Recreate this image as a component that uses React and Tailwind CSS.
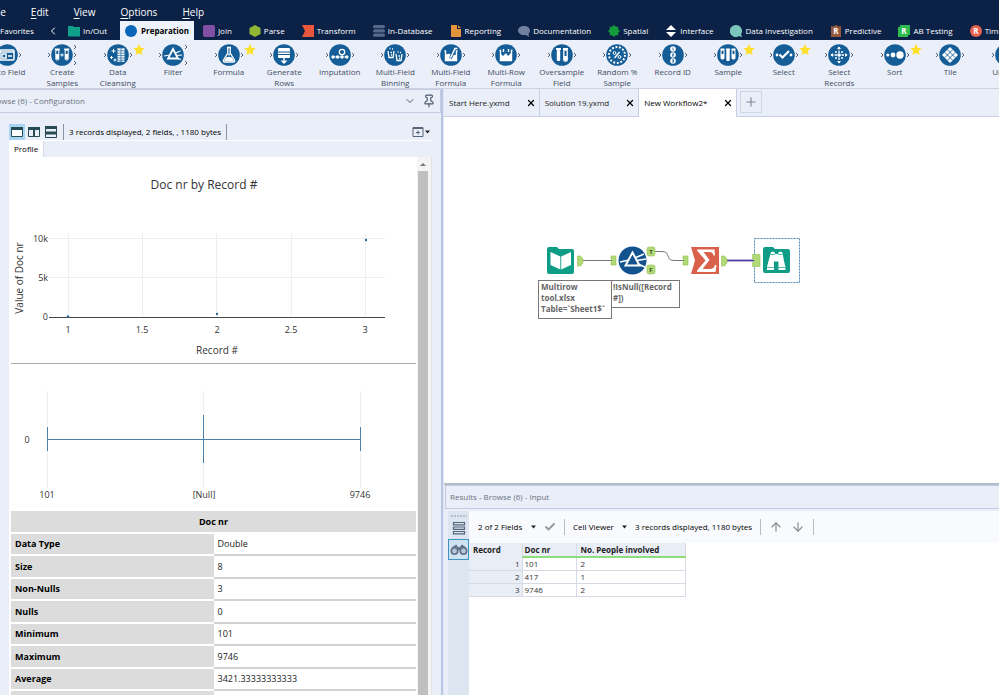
import { ChevronDown, ChevronLeft, Pin, ArrowUp, ArrowDown, Plus, X, Check } from 'lucide-react'

const menus = ['File', 'Edit', 'View', 'Options', 'Help']

const categories = [
  { name: 'In/Out', icon: <path d="M0 1h5l1 1h6v9.500H0z" fill="#0fa08c" /> },
  { name: 'Preparation', active: true, icon: <circle cx="6" cy="6" r="6" fill="#0a66b8" /> },
  { name: 'Join', icon: <rect width="12" height="12" rx="2" fill="#8150a5" /> },
  { name: 'Parse', icon: <path d="M6 0l5.500 3v6L6 12 .5 9V3z" fill="#8fb735" /> },
  { name: 'Transform', icon: <path d="M0 0h12v12H0l3-6z" fill="#e8563c" /> },
  {
    name: 'In-Database',
    icon: (
      <g fill="#56688c">
        <rect y="0" width="12" height="3.200" rx="1.500" />
        <rect y="4.300" width="12" height="3.200" rx="1.500" />
        <rect y="8.600" width="12" height="3.200" rx="1.500" />
      </g>
    ),
  },
  { name: 'Reporting', icon: <path d="M1 0h6v4h4v8H1zM8 0l3 3H8z" fill="#e2953c" /> },
  { name: 'Documentation', icon: <path d="M6 1c3.500 0 6 1.800 6 4.500 0 1.600-.8 2.700-1.500 3.300L11 12 8 10H6C2.500 10 0 8.200 0 5.500S2.500 1 6 1z" fill="#72809f" /> },
  { name: 'Spatial', icon: <path d="M6 0l1.800 1.700 2.400 0 0 2.500L12 6l-1.800 1.800v2.400H7.800L6 12l-1.800-1.800H1.800V7.800L0 6l1.800-1.800V1.700h2.400z" fill="#139b3c" /> },
  { name: 'Interface', icon: <path d="M6 0l5 5H1zM1 7h10l-5 5z" fill="#fff" /> },
  { name: 'Data Investigation', icon: <path d="M6 0a6 6 0 0 1 5 9.300l1 2.100-.8.600-2-1.100A6 6 0 1 1 6 0z" fill="#7cc5bd" /> },
  { name: 'Predictive', letter: 'R', icon: <path d="M1 1l2 .5L6 0l3 1.500 2-.5v11H1z" fill="#96583a" /> },
  { name: 'AB Testing', letter: 'R', icon: <path d="M2 0h10v10h-2v2H0V2h2z" fill="#2ebc4f" /> },
  { name: 'Time Series', letter: 'R', icon: <circle cx="6" cy="6" r="6" fill="#e8604f" /> },
]

// every glyph is drawn inside a 22x22 disc
const glyphs = {
  autoField: (
    <>
      <rect x="4" y="6" width="14" height="10" rx="1" fill="none" stroke="#fff" strokeWidth="1.500" />
      <path d="M4 8h14M6 10h4v4H6zM12 12h4" fill="none" stroke="#fff" strokeWidth="1.500" />
    </>
  ),
  tubes: (
    <>
      <path d="M3.800 5.500h5M13.200 5.500h5" stroke="#fff" strokeWidth="1.800" />
      <rect x="4.800" y="6" width="3" height="10" rx="1" fill="none" stroke="#fff" />
      <rect x="14.200" y="6" width="3" height="10" rx="1" fill="none" stroke="#fff" />
      <path d="M5 10h3v5H5zM14 10h3v5h-3z" fill="#fff" />
      <path d="M9.300 11h3.400M11 9.300v3.400" stroke="#fff" />
    </>
  ),
  cleansing: (
    <>
      <path d="M6.500 5v4M4.500 7h4M4.500 12v3M3 13.500h3M8 14.500v3M6.500 16h3" stroke="#fff" />
      <path d="M10.500 4q3.500 1 7 0v14q-3.500-1-7 0z" fill="#fff" />
      <path d="M10 6.800h8M10 9.200h8M10 11.600h8M10 14h8M10 16.200h8M14 4.500v13" stroke="#155d96" strokeWidth=".7" />
    </>
  ),
  filter: (
    <>
      <path d="M11 5l5 9.500H6z" fill="none" stroke="#fff" strokeWidth="1.800" />
      <path d="M2 12l6-1M13.500 9l5-2M14 11.500l6-.5M15 14l4 1.500" stroke="#fff" strokeWidth="1.200" />
    </>
  ),
  formula: (
    <>
      <path d="M9 3.500h4M9.800 4v5L5.500 16c-.6 1.200 0 2 1.200 2h8.600c1.200 0 1.800-.8 1.200-2L12.200 9V4" fill="none" stroke="#fff" strokeWidth="1.300" />
      <path d="M8 13.500q3-1.500 6 0l2 3.500H6z" fill="#fff" />
      <circle cx="11" cy="10.500" r="1" fill="#fff" />
    </>
  ),
  rows: (
    <>
      <rect x="5" y="4" width="12" height="10" rx="1" fill="#fff" />
      <path d="M5 8h12M5 10.500h12" stroke="#155d96" />
      <path d="M11 13v6M8.500 16.500L11 19l2.500-2.500" fill="none" stroke="#fff" strokeWidth="1.400" />
    </>
  ),
  imputation: (
    <>
      <path d="M3 13h16" stroke="#fff" strokeWidth=".8" />
      <circle cx="4" cy="13" r="1.700" fill="#fff" />
      <circle cx="8.500" cy="13" r="1.700" fill="#fff" />
      <circle cx="13" cy="13" r="1.700" fill="#fff" />
      <circle cx="17.800" cy="13" r="1.700" fill="#fff" />
      <circle cx="13" cy="8" r="2.700" fill="none" stroke="#fff" strokeWidth="1.300" />
    </>
  ),
  binning: (
    <>
      <path d="M4 7l1 6.500h4L10 7M12 10l1 6.500h4l1-6.500" fill="none" stroke="#fff" strokeWidth="1.300" />
      <path d="M5.500 4.500h1M8 5h1M6.500 8.500h1.500M7 11h1M13.500 8h1M16 8.500h1M14.500 12H16M15 14.500h1" stroke="#fff" strokeWidth="1.400" />
    </>
  ),
  beakerStir: (
    <>
      <path d="M4.500 7h1v9.500h11V7h1" fill="none" stroke="#fff" strokeWidth="1.400" />
      <path d="M6 10.500q3-1.500 5 0t5 0v6H6z" fill="#fff" />
      <path d="M10.500 14.500l4-10H18" fill="none" stroke="#155d96" strokeWidth="3" />
      <path d="M10.500 14L15 4.500h2.500" fill="none" stroke="#fff" strokeWidth="1.500" />
    </>
  ),
  beakerDrops: (
    <>
      <path d="M4.500 6.500h1v10h11v-10h1" fill="none" stroke="#fff" strokeWidth="1.400" />
      <path d="M6 10l2 2 3-3 2 3 3-3v7H6z" fill="#fff" />
      <path d="M8.500 5v3M13.500 5v3" stroke="#fff" strokeWidth="1.400" />
    </>
  ),
  oversample: (
    <>
      <path d="M5 5h5M12 5h5" stroke="#fff" strokeWidth="1.800" />
      <rect x="5.800" y="6" width="3.400" height="11" rx="1" fill="#fff" />
      <rect x="12.800" y="6" width="3.400" height="11" rx="1" fill="none" stroke="#fff" strokeWidth="1.300" />
      <path d="M13 12h3v4h-3z" fill="#fff" />
    </>
  ),
  percent: (
    <>
      <circle cx="11" cy="11" r="8" fill="none" stroke="#fff" strokeWidth="2" strokeDasharray="1.900 1.690" />
      <path d="M8.500 14l5-6" stroke="#fff" strokeWidth="1.300" />
      <circle cx="8.500" cy="9" r="1.400" fill="none" stroke="#fff" />
      <circle cx="13.500" cy="13" r="1.400" fill="none" stroke="#fff" />
    </>
  ),
  recordId: (
    <>
      <circle cx="11" cy="5" r="2.800" fill="#fff" />
      <circle cx="11" cy="11" r="2.800" fill="#fff" />
      <circle cx="11" cy="17" r="2.800" fill="#fff" />
      <path d="M11 3.500v3M10 10h2l-2 2h2M10 16h2l-1 1 1 1h-2" fill="none" stroke="#155d96" strokeWidth=".8" />
    </>
  ),
  sample: (
    <>
      <path d="M3.500 5.500h4M9 5.500h4M14.500 5.500h4" stroke="#fff" strokeWidth="1.800" />
      <rect x="4" y="6" width="3" height="9" rx="1" fill="none" stroke="#fff" />
      <rect x="9.300" y="6" width="3.400" height="11" rx="1" fill="#fff" />
      <rect x="15" y="6" width="3" height="9" rx="1" fill="none" stroke="#fff" />
      <path d="M4 10h3v5H4zM15 10h3v5h-3z" fill="#fff" />
    </>
  ),
  select: (
    <>
      <circle cx="4" cy="11" r="1.400" fill="#fff" />
      <circle cx="18" cy="11" r="1.400" fill="#fff" />
      <path d="M6.500 10.500l3 3L16 7" fill="none" stroke="#fff" strokeWidth="2.200" />
    </>
  ),
  selectRecords: (
    <>
      <path d="M11 3v16M3 11h16" stroke="#fff" strokeWidth="1.300" strokeDasharray="2.500 1" />
      <path d="M9 5l2-2.500L13 5zM9 17l2 2.500 2-2.500zM5 9l-2.500 2L5 13zM17 9l2.500 2-2.500 2z" fill="#fff" />
      <circle cx="8" cy="8" r="1" fill="#fff" />
      <circle cx="14" cy="8" r="1" fill="#fff" />
      <circle cx="8" cy="14" r="1" fill="#fff" />
      <circle cx="14" cy="14" r="1" fill="#fff" />
      <circle cx="11" cy="11" r="1.800" fill="#fff" />
    </>
  ),
  sort: (
    <>
      <circle cx="3.800" cy="11" r="1.600" fill="#fff" />
      <circle cx="9" cy="11" r="2.400" fill="#fff" />
      <circle cx="16" cy="11" r="3.700" fill="#fff" />
    </>
  ),
  tile: (
    <>
      <path d="M11 3l8 8-8 8-8-8z" fill="#fff" />
      <path d="M8.300 5.700l8 8M5.700 8.300l8 8M13.700 5.700l-8 8M16.300 8.300l-8 8" stroke="#155d96" strokeWidth=".9" />
    </>
  ),
  unique: <path d="M4 5h5l3 3M4 11h6M4 16h5l3-3M14 5h4M14 16h4" fill="none" stroke="#fff" strokeWidth="1.800" />,
}

const tools = [
  { name: 'Auto Field', icon: 'autoField' },
  { name: 'Create Samples', icon: 'tubes', outs: [4, 12, 20] },
  { name: 'Data Cleansing', icon: 'cleansing', star: true },
  { name: 'Filter', icon: 'filter', outs: [4, 20] },
  { name: 'Formula', icon: 'formula', star: true },
  { name: 'Generate Rows', icon: 'rows' },
  { name: 'Imputation', icon: 'imputation' },
  { name: 'Multi-Field Binning', icon: 'binning' },
  { name: 'Multi-Field Formula', icon: 'beakerStir' },
  { name: 'Multi-Row Formula', icon: 'beakerDrops' },
  { name: 'Oversample Field', icon: 'oversample' },
  { name: 'Random % Sample', icon: 'percent' },
  { name: 'Record ID', icon: 'recordId' },
  { name: 'Sample', icon: 'sample', star: true },
  { name: 'Select', icon: 'select', star: true },
  { name: 'Select Records', icon: 'selectRecords' },
  { name: 'Sort', icon: 'sort', star: true },
  { name: 'Tile', icon: 'tile' },
  { name: 'Unique', icon: 'unique', outs: [4, 20] },
]

const profile = [
  ['Data Type', 'Double'],
  ['Size', '8'],
  ['Non-Nulls', '3'],
  ['Nulls', '0'],
  ['Minimum', '101'],
  ['Maximum', '9746'],
  ['Average', '3421.33333333333'],
  ['Median', '417'],
]

const records = [
  ['1', '101', '2'],
  ['2', '417', '1'],
  ['3', '9746', '2'],
]

function Header() {
  return (
    <header className="flex h-10 shrink-0 flex-col overflow-hidden bg-[#0b2145] text-white">
      <nav className="-ml-[10px] flex h-[21px] shrink-0 items-center gap-[25px] pt-1 text-[10px]">
        {menus.map((m) => (
          <button key={m} className="whitespace-nowrap">
            <span className="underline underline-offset-2">{m[0]}</span>
            {m.slice(1)}
          </button>
        ))}
      </nav>
      <div className="flex h-[19px] items-center gap-px text-[8px] leading-4">
        <button className="w-[34px] shrink-0">Favorites</button>
        <button className="flex w-6 shrink-0 justify-end" aria-label="Scroll left">
          <ChevronLeft className="h-3 w-3" strokeWidth={2} />
        </button>
        {categories.map((c) => (
          <button
            key={c.name}
            className={
              c.active
                ? 'ml-1 flex h-full shrink-0 items-center gap-1 bg-[#eef2fa] px-[5px] font-bold text-black'
                : 'flex shrink-0 items-center gap-[3px] whitespace-nowrap px-2'
            }
          >
            <svg width="12" height="12" viewBox="0 0 12 12">
              {c.icon}
              {c.letter && (
                <text x="6" y="9" textAnchor="middle" fontSize="8" fontWeight="700" fill="#fff">{c.letter}</text>
              )}
            </svg>
            {c.name}
          </button>
        ))}
      </div>
    </header>
  )
}

function Tool({ tool }) {
  const outs = tool.outs || [12]
  return (
    <button className="flex w-1/18 shrink-0 flex-col items-center pt-[3px]">
      <svg width="54" height="24" viewBox="0 0 54 24">
        <circle cx="27" cy="12" r="10.800" fill="#155d96" />
        <g transform="translate(16 1)">{glyphs[tool.icon]}</g>
        <path d="M13 10l2 2-2 2" fill="none" stroke="#4d6079" />
        {outs.map((y) => (
          <path key={y} d={`M39 ${y - 2}l2 2-2 2`} fill="none" stroke="#4d6079" />
        ))}
        {tool.star && (
          <path d="M48 1l1.700 3.700 4 .5-3 2.700.8 4L48 10l-3.500 1.900.8-4-3-2.700 4-.5z" fill="#fde02a" />
        )}
      </svg>
      <span className="-mt-px w-12 text-center text-[8px] leading-[11px] text-[#3f4e61]">{tool.name}</span>
    </button>
  )
}

function ScatterChart() {
  return (
    <svg className="block w-full" height="206" viewBox="0 0 408 206" fill="#333">
      <text x="195" y="32" textAnchor="middle" fontSize="12">Doc nr by Record #</text>
      <path d="M59.500 76v83M133.500 76v83M207.500 76v83M282.500 76v83M356.500 76v83M40 81.500h336M40 120.500h336" stroke="#eee" />
      <path d="M40 160.500h336" stroke="#444" />
      <g fontSize="9" textAnchor="end">
        <text x="39" y="85">10k</text>
        <text x="39" y="124">5k</text>
        <text x="39" y="163">0</text>
      </g>
      <g fontSize="9" textAnchor="middle">
        <text x="59" y="176">1</text>
        <text x="133" y="176">1.5</text>
        <text x="208" y="176">2</text>
        <text x="282" y="176">2.5</text>
        <text x="356" y="176">3</text>
      </g>
      <g fill="#2c6a97">
        <circle cx="59" cy="159.500" r="1.200" />
        <circle cx="208" cy="157" r="1.200" />
        <circle cx="357" cy="83" r="1.200" />
      </g>
      <text x="208" y="197" textAnchor="middle" fontSize="10">Record #</text>
      <text transform="translate(14 121) rotate(-90)" textAnchor="middle" fontSize="10">Value of Doc nr</text>
    </svg>
  )
}

function BoxPlot() {
  return (
    <svg className="block w-full" height="147" viewBox="0 0 408 147" fill="#333">
      <path d="M38.500 27v97M194.500 27v97M351.500 27v97" stroke="#eee" />
      <path d="M38.500 75.500h313M38.500 63v24M351.500 63v24M194.500 51v48" fill="none" stroke="#4a82ab" />
      <g fontSize="9" textAnchor="middle">
        <text x="18" y="79">0</text>
        <text x="38" y="134">101</text>
        <text x="195" y="134">[Null]</text>
        <text x="351" y="134">9746</text>
      </g>
    </svg>
  )
}

function ConfigPanel() {
  return (
    <aside className="flex w-[443px] shrink-0 flex-col border-r-2 border-[#b7c6e3] bg-[#e9eef8]">
      <div className="flex h-6 shrink-0 items-center justify-between overflow-hidden border border-l-0 border-[#c3cce2] pr-1 text-[8px] text-[#6b7280]">
        <span className="-ml-3">Browse (6) - Configuration</span>
        <div className="flex items-center gap-1.5 text-[#4d5a6e]">
          <button aria-label="Collapse"><ChevronDown className="h-3 w-3" /></button>
          <button aria-label="Pin"><Pin className="h-3.5 w-3.5" /></button>
        </div>
      </div>
      <div className="mx-[9px] flex h-7 shrink-0 items-end border-b border-white text-[8px] text-black">
        <div className="flex h-4 items-center gap-px">
          <button className="bg-[#a9d5f5] p-px" aria-label="Single view">
            <svg width="14" height="14" viewBox="0 0 14 14">
              <path d="M1.500 2.500h11v9h-11z" fill="#fff" stroke="#274b55" />
              <path d="M1 2h12v3H1z" fill="#274b55" />
            </svg>
          </button>
          <button className="p-px" aria-label="Vertical split">
            <svg width="14" height="14" viewBox="0 0 14 14">
              <path d="M1.500 2.500h11v9h-11z" fill="#e9eef8" stroke="#274b55" />
              <path d="M1 2h12v3H1zM6 2h2v10H6z" fill="#274b55" />
            </svg>
          </button>
          <button className="p-px" aria-label="Horizontal split">
            <svg width="14" height="14" viewBox="0 0 14 14">
              <path d="M1.500 1.500h11v11h-11z" fill="#e9eef8" stroke="#274b55" />
              <path d="M1 1h12v3H1zM1 6.500h12v3H1z" fill="#274b55" />
            </svg>
          </button>
        </div>
        <span className="ml-1 h-4 border-x border-[#8b93a3] px-[5px] leading-4">3 records displayed, 2 fields, , 1180 bytes</span>
        <button className="ml-auto flex h-4 items-center gap-px pr-0.5" aria-label="Add">
          <svg width="12" height="12" viewBox="0 0 12 12"><path d="M1 1.500h10v9H1zM1 2.500h10M6 4.500v4M4 6.500h4" fill="none" stroke="#596579" /></svg>
          <Caret />
        </button>
      </div>
      <div className="ml-[9px] shrink-0 self-start border-r border-[#d5dbe8] bg-white px-[5px] text-[8px] leading-4 text-black">Profile</div>
      <div className="mx-[9px] flex min-h-0 flex-1 border-r border-[#dfe3ea] bg-white">
        <div className="min-w-0 flex-1 overflow-hidden">
          <ScatterChart />
          <hr className="ml-0.5 w-[405px] border-[#a8a8a8]" />
          <BoxPlot />
          <table className="ml-0.5 w-[405px] table-fixed border-collapse text-left text-[9px] leading-4 text-[#222]">
            <thead>
              <tr className="h-[22px]">
                <th colSpan={2} className="border-b-2 border-white bg-[#dcdcdc] text-center text-black">Doc nr</th>
              </tr>
            </thead>
            <tbody>
              {profile.map(([label, value]) => (
                <tr key={label} className="odd:h-[22px] even:h-[23px]">
                  <th className="border-b-2 border-white bg-[#dcdcdc] px-1 text-black">{label}</th>
                  <td className="border-b-2 border-[#d2d2d2] px-1">{value}</td>
                </tr>
              ))}
            </tbody>
          </table>
        </div>
        <div className="flex w-3.5 shrink-0 flex-col items-center bg-[#f4f4f4] pr-0.5">
          <svg className="my-1 shrink-0" width="6" height="6" viewBox="0 0 6 6"><path d="M0 5l3-3 3 3z" fill="#777" /></svg>
          <div className="w-2.5 flex-1 bg-[#bfbfbf]" />
        </div>
      </div>
    </aside>
  )
}

function Caret() {
  return <svg className="pointer-events-none" width="5" height="4" viewBox="0 0 5 4"><path d="M0 .5h5L2.500 3.500z" fill="#222" /></svg>
}

function FileTab({ name, active }) {
  return (
    <div className={active ? 'flex items-center gap-4 bg-white pl-[5px] pr-[3px] text-black' : 'flex items-center gap-4 border-r border-b border-[#c6d0e4] pl-[5px] pr-[3px] text-[#222]'}>
      <button>{name}</button>
      <button aria-label={`Close ${name}`}><X className="h-2.5 w-2.5 text-black" strokeWidth={3} /></button>
    </div>
  )
}

function Canvas() {
  return (
    <div className="relative min-h-0 flex-1 overflow-hidden bg-white">
      <svg className="absolute left-0 top-0" width="400" height="200" viewBox="444 117 400 200">
        {/* connections */}
        <path d="M582 260.500h30M655 251.500h7c9 0 3 9 12 9h10" fill="none" stroke="#777" />
        <path d="M727 260.500h27" stroke="#4a3fa5" strokeWidth="1.800" />
        <rect x="754.500" y="238.500" width="45" height="44" fill="none" stroke="#4f86b3" strokeDasharray="2 1" />
        {/* anchors */}
        <g fill="#b2d977" stroke="#93c153" strokeWidth=".6">
          <path d="M577.500 256h3l2.500 3v4l-2.500 3h-3z" />
          <path d="M611 256h5v9h-5v-3l1.500-1.500L611 259z" />
          <rect x="647" y="247" width="8" height="9" rx="2" />
          <rect x="647" y="265" width="8" height="9" rx="2" />
          <path d="M683 256h5v9h-5v-3l1.500-1.500L683 259z" />
          <path d="M721.500 256h3l2.500 3v4l-2.500 3h-3z" />
          <path d="M752.500 254.500h7.500v12h-7.500v-4l2-2-2-2z" />
        </g>
        <g fontSize="6" fontWeight="700" fill="#34501a" textAnchor="middle">
          <text x="651" y="254">T</text>
          <text x="651" y="272">F</text>
        </g>
        {/* input data */}
        <path d="M547 249q0-2 2-2h8l2 2h13q2 0 2 2v21q0 2-2 2h-23q-2 0-2-2z" fill="#0f9d87" />
        <path d="M550.500 252l9.800 4.500v13l-9.800-4.500zM571 252l-9.800 4.500v13l9.800-4.500z" fill="#fff" />
        {/* filter */}
        <circle cx="632.500" cy="260.500" r="14" fill="#12538f" />
        <path d="M632.500 252.500l7 13h-14z" fill="none" stroke="#fff" strokeWidth="2" />
        <path d="M620 262l9-2M636 257.500l8-3.500M637 260.500l9-1.500M638 264l7 3" stroke="#fff" strokeWidth="1.500" />
        {/* summarize */}
        <path d="M691 247h28v27h-28l4-13.500z" fill="#d9614c" />
        <path d="M697 249.500h17.500l.5 6h-1.500q-.5-3.500-4-3.500h-6l6 8-7 9h7.500q4 0 5-4h1.500l-1 7H697v-1.500l8.500-10-8.500-10z" fill="#fff" />
        {/* browse */}
        <path d="M763 249q0-2 2-2h8l2 2h13q2 0 2 2v20q0 2-2 2h-23q-2 0-2-2z" fill="#0f9d87" />
        <path d="M770.500 254q0-2.500 2.300-2.500t2.300 2.500h3q0-2.500 2.300-2.500t2.300 2.500l1.300 7 1.500 6v3h-7v-8.500h-4.500v8.500h-7v-3l1.500-6z" fill="#fff" />
        <path d="M767 267.500h7M778.500 267.500h7M770.500 254.500h4.500M778 254.500h4.500" stroke="#0f9d87" strokeWidth=".7" />
      </svg>
      <div className="absolute left-[94px] top-[163px] w-[74px] border border-[#777] px-0.5 pb-1 text-[8px] font-bold leading-[11px] text-[#666]">
        Multirow<br />tool.xlsx<br />Table=`Sheet1$`
      </div>
      <div className="absolute left-[167px] top-[163px] w-[69px] border border-[#777] px-px pb-1 text-[8px] font-bold leading-[11px] text-[#666]">
        !IsNull([Record<br />#])
      </div>
    </div>
  )
}

function DropDown({ label }) {
  return (
    <label className="flex items-center gap-2">
      <select aria-label={label} className="appearance-none bg-transparent text-black">
        <option>{label}</option>
      </select>
      <Caret />
    </label>
  )
}

function Results() {
  return (
    <section className="flex h-[212px] shrink-0 flex-col border-t-2 border-[#b3bccd] bg-[#e9eef8]">
      <div className="ml-px flex h-6 shrink-0 items-center border border-r-0 border-[#c3cce2] pl-1 text-[8px] text-[#6b7280]">
        Results - Browse (6) - Input
      </div>
      <div className="ml-1 mt-0.5 flex min-h-0 flex-1">
        <div className="flex w-[21px] shrink-0 flex-col items-center bg-[#dde5f1]">
          <svg className="mt-1 shrink-0" width="16" height="2" viewBox="0 0 16 2"><path d="M0 1h16" stroke="#8c98ac" strokeDasharray="2 1" /></svg>
          <button className="flex h-[22px] w-full shrink-0 items-center justify-center" aria-label="Messages">
            <svg width="14" height="14" viewBox="0 0 14 14"><path d="M1.500 1.500h11v2.300h-11zM1.500 6h11v2.300h-11zM1.500 10.500h11v2.300h-11z" fill="none" stroke="#52647d" strokeWidth="1.200" /></svg>
          </button>
          <button className="flex h-[21px] w-full shrink-0 items-center justify-center border border-[#3a93c0] bg-[#cfe3f3]" aria-label="Browse">
            <svg width="18" height="12" viewBox="0 0 18 12">
              <circle cx="4.500" cy="7" r="3.200" fill="#b9c6d8" stroke="#5f7088" strokeWidth="1.600" />
              <circle cx="13.500" cy="7" r="3.200" fill="#b9c6d8" stroke="#5f7088" strokeWidth="1.600" />
              <path d="M2.500 4L6 1.500 8 4h2l2-2.500L15.500 4M7.500 5.500h3" fill="none" stroke="#5f7088" strokeWidth="1.600" />
            </svg>
          </button>
        </div>
        <div className="min-w-0 flex-1 bg-white">
          <div className="flex h-8 items-center gap-2 bg-[#f8fafd] pl-[9px] text-[8px] text-black">
            <DropDown label="2 of 2 Fields" />
            <Check className="h-3 w-3 text-[#9a9a9a]" strokeWidth={4} />
            <span className="h-4 border-r border-[#bbb]" />
            <DropDown label="Cell Viewer" />
            <span>3 records displayed, 1180 bytes</span>
            <span className="h-4 border-r border-[#bbb]" />
            <button aria-label="Previous"><ArrowUp className="h-3.5 w-3.5 text-[#888]" /></button>
            <button aria-label="Next"><ArrowDown className="h-3.5 w-3.5 text-[#888]" /></button>
            <span className="h-4 border-r border-[#bbb]" />
          </div>
          <table className="w-[217px] table-fixed border-collapse text-left text-[8px] leading-3 text-[#333]">
            <thead>
              <tr className="h-3.5 bg-[#e9edf6] text-[#222]">
                <th className="w-[53px] pl-1">Record</th>
                <th className="w-[54px] border-x border-b-2 border-[#d5dae4] border-b-[#8fdc7c] pl-0.5">Doc nr</th>
                <th className="border-b-2 border-r border-r-[#d5dae4] border-b-[#8fdc7c] pl-1">No. People involved</th>
              </tr>
            </thead>
            <tbody>
              {records.map(([id, doc, people]) => (
                <tr key={id}>
                  <td className="border-b border-[#d5dae4] bg-[#e9edf6] pr-0.5 text-right">{id}</td>
                  <td className="border border-[#d5dae4] pl-0.5">{doc}</td>
                  <td className="border border-[#d5dae4] pl-1">{people}</td>
                </tr>
              ))}
            </tbody>
          </table>
        </div>
      </div>
    </section>
  )
}

export default function App() {
  return (
    <div className="flex h-screen flex-col overflow-hidden bg-[#e9eef8] font-['Open_Sans',sans-serif]">
      <Header />
      <div className="h-[49px] shrink-0 overflow-hidden border-b border-[#ccd2e0] bg-[#ebeff9]">
        <div className="-ml-[21px] w-screen">
          <div className="flex">
            {tools.map((t) => <Tool key={t.name} tool={t} />)}
          </div>
        </div>
      </div>
      <div className="flex min-h-0 flex-1">
        <ConfigPanel />
        <main className="flex min-w-0 flex-1 flex-col border-l border-[#dfe5f2]">
          <div className="flex h-7 shrink-0 text-[8px]">
            <FileTab name="Start Here.yxmd" />
            <FileTab name="Solution 19.yxmd" />
            <FileTab name="New Workflow2*" active />
            <div className="flex-1 border-b border-l border-[#c6d0e4] px-[3px] pt-0.5">
              <button className="flex h-[22px] w-[22px] items-center justify-center border border-[#cdd5e6]" aria-label="New workflow">
                <Plus className="h-3.5 w-3.5 text-[#7d8799]" />
              </button>
            </div>
          </div>
          <Canvas />
          <Results />
        </main>
      </div>
    </div>
  )
}
